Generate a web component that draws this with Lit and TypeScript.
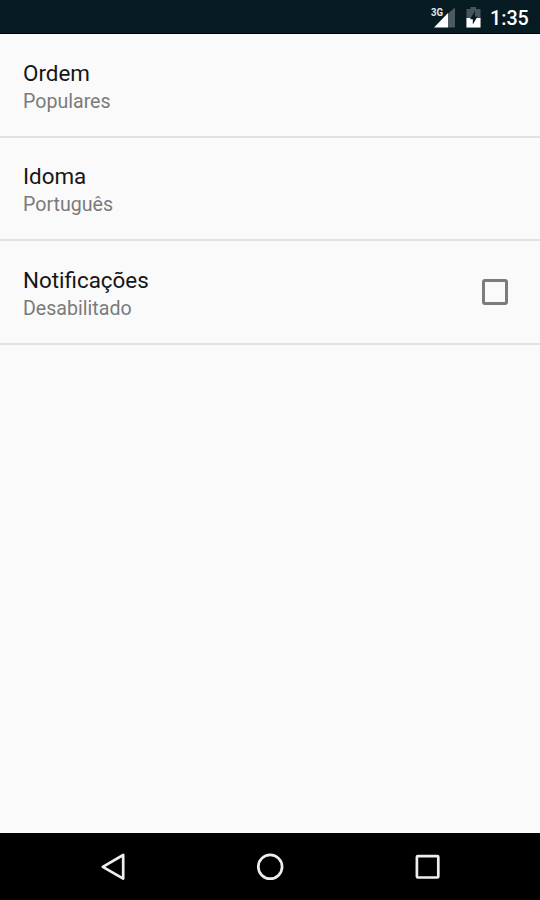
import { LitElement, html, css, svg } from "lit";
import { customElement } from "lit/decorators.js";

interface Preference {
  title: string;
  summary: string;
  checkbox?: boolean;
}

const preferences: Preference[] = [
  { title: "Ordem", summary: "Populares" },
  { title: "Idoma", summary: "Português" },
  { title: "Notificações", summary: "Desabilitado", checkbox: true },
];

const navIcons = [
  svg`<path d="M30.2 8 V31.6 L9.8 19.8 Z" />`,
  svg`<circle cx="20.2" cy="19.8" r="11.9" />`,
  svg`<rect x="9.9" y="9.1" width="21.4" height="21.4" rx="1" />`,
];

@customElement("app-root")
export class AppRoot extends LitElement {
  static styles = css`
    :host {
      display: flex;
      flex-direction: column;
      height: 100vh;
      background: #fafafa;
      font-family: Roboto, sans-serif;
      overflow: hidden;
    }
    .status {
      flex: none;
      height: 34px;
      box-sizing: border-box;
      background: #071b22;
      border-bottom: 1px solid #000;
      display: flex;
      justify-content: flex-end;
      padding-right: 11px;
    }
    .status svg {
      width: 56px;
      height: 33px;
      display: block;
    }
    .network {
      font: 700 11px Roboto, sans-serif;
      fill: #e4e8e9;
    }
    .clock {
      width: 39px;
      margin-left: 4px;
      color: #fff;
      font-size: 19.7px;
      font-weight: 500;
      line-height: 38px;
      white-space: nowrap;
    }
    .list {
      flex: 1;
    }
    .row {
      height: 103.67px;
      box-sizing: border-box;
      border-bottom: 2px solid #e2e2e2;
      padding: 0 32px 0 23px;
      display: flex;
      align-items: center;
      justify-content: space-between;
    }
    .text {
      padding-top: 3.4px;
    }
    .title {
      color: #161616;
      font-size: 22.4px;
      line-height: 30px;
    }
    .summary {
      color: #7b7b7b;
      font-size: 19.6px;
      line-height: 28px;
    }
    .box {
      width: 26px;
      height: 26px;
      box-sizing: border-box;
      border: 3px solid #7c7c7c;
      border-radius: 3px;
    }
    .nav {
      flex: none;
      height: 67px;
      background: #000;
      display: flex;
      justify-content: center;
      align-items: center;
      gap: 117px;
    }
    .nav svg {
      width: 40px;
      height: 40px;
      fill: none;
      stroke: #eee;
      stroke-width: 2.7;
      stroke-linejoin: round;
    }
  `;

  render() {
    return html`
      <div class="status">
        <svg viewBox="0 0 56 33">
          <path d="M17.5 27.5 H25 V7.5 L17.5 14 Z" fill="#4c5a60" />
          <path d="M4 27.5 H18 V13 Z" fill="#fff" />
          <text class="network" x="1" y="16" textLength="12" lengthAdjust="spacingAndGlyphs">3G</text>
          <path d="M36.5 9 H40.5 V7 H46 V9 H50.5 V27.5 H36.5 Z" fill="#46555b" />
          <path d="M36.5 18 H50.5 V27.5 H36.5 Z" fill="#fff" />
          <path d="M45 11 L40 19.3 H42.8 V24.5 L47.5 16.5 H45 Z" fill="#071b22" />
        </svg>
        <div class="clock">1:35</div>
      </div>
      <div class="list">
        ${preferences.map(
          (p) => html`
            <div class="row">
              <div class="text">
                <div class="title">${p.title}</div>
                <div class="summary">${p.summary}</div>
              </div>
              ${p.checkbox ? html`<div class="box"></div>` : null}
            </div>
          `,
        )}
      </div>
      <div class="nav">
        ${navIcons.map((icon) => html`<svg viewBox="0 0 40 40">${icon}</svg>`)}
      </div>
    `;
  }
}
